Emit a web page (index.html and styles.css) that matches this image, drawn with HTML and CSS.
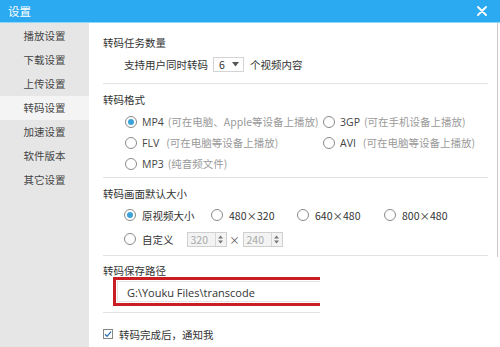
FILE: index.html
```html
<!DOCTYPE html>
<html lang="zh">
<head>
<meta charset="utf-8">
<link rel="stylesheet" href="styles.css">
</head>
<body>
<div class="window">
  <div class="titlebar">
    <span class="title">设置</span>
    <svg class="close" width="10" height="10" viewBox="0 0 10 10"><path d="M1 1L9 9M9 1L1 9" stroke="#fff" stroke-width="1.8" stroke-linecap="round"/></svg>
  </div>
  <div class="main">
    <ul class="sidebar">
      <li>播放设置</li>
      <li>下载设置</li>
      <li>上传设置</li>
      <li class="active">转码设置</li>
      <li>加速设置</li>
      <li>软件版本</li>
      <li>其它设置</li>
    </ul>
    <div class="content">
      <section class="sec sec-count">
        <div class="sec-title">转码任务数量</div>
        <div class="count-row">
          <span>支持用户同时转码</span>
          <span class="select">6<svg width="7" height="5" viewBox="0 0 7 5"><path d="M0 0H7L3.5 4.5Z" fill="#555"/></svg></span>
          <span>个视频内容</span>
        </div>
      </section>
      <section class="sec sec-format">
        <div class="sec-title">转码格式</div>
        <div class="format-grid">
          <label class="opt"><span class="radio checked"></span><b>MP4</b><i>(可在电脑、Apple等设备上播放)</i></label>
          <label class="opt"><span class="radio"></span><b>3GP</b><i>(可在手机设备上播放)</i></label>
          <label class="opt"><span class="radio"></span><b>FLV</b><i class="wide">(可在电脑等设备上播放)</i></label>
          <label class="opt"><span class="radio"></span><b>AVI</b><i class="wide">(可在电脑等设备上播放)</i></label>
          <label class="opt"><span class="radio"></span><b>MP3</b><i>(纯音频文件)</i></label>
        </div>
      </section>
      <section class="sec sec-size">
        <div class="sec-title">转码画面默认大小</div>
        <div class="size-grid">
          <label class="opt"><span class="radio checked"></span><span>原视频大小</span></label>
          <label class="opt"><span class="radio"></span><span>480×320</span></label>
          <label class="opt"><span class="radio"></span><span>640×480</span></label>
          <label class="opt"><span class="radio"></span><span>800×480</span></label>
        </div>
        <div class="custom-row">
          <label class="opt"><span class="radio"></span><span>自定义</span></label>
          <span class="spin"><span class="spin-val">320</span><span class="spin-btn"><svg width="5" height="9" viewBox="0 0 5 9"><path d="M0 3.5L2.5 0.5L5 3.5ZM0 5.5L2.5 8.5L5 5.5Z" fill="#777"/></svg></span></span>
          <span class="times">×</span>
          <span class="spin"><span class="spin-val">240</span><span class="spin-btn"><svg width="5" height="9" viewBox="0 0 5 9"><path d="M0 3.5L2.5 0.5L5 3.5ZM0 5.5L2.5 8.5L5 5.5Z" fill="#777"/></svg></span></span>
        </div>
      </section>
      <section class="sec sec-path">
        <div class="sec-title">转码保存路径</div>
        <div class="path-box"><div class="path-input">G:\Youku Files\transcode</div></div>
      </section>
      <section class="sec-notify">
        <label class="check-row"><span class="checkbox"><svg width="8" height="8" viewBox="0 0 8 8"><path d="M1 4.2L3.1 6.3L7 1.6" fill="none" stroke="#2f6fb0" stroke-width="1.3"/></svg></span><span>转码完成后，通知我</span></label>
      </section>
    </div>
  </div>
  <div class="cover"></div>
</div>
</body>
</html>
```

FILE: styles.css
```css
* { box-sizing: border-box; margin: 0; padding: 0; }
html, body { width: 500px; height: 347px; overflow: hidden; background: #fff; }
body {
  font-family: "Noto Sans CJK SC", "Noto Sans", sans-serif;
  font-size: 10.5px;
  color: #333;
}
.window { position: relative; width: 500px; height: 347px; display: flex; flex-direction: column; }
.titlebar {
  height: 23px;
  background: #2caaf1;
  border-bottom: 1px solid #8fd6fb;
  display: flex;
  align-items: center;
  justify-content: space-between;
  padding: 0 13px 0 8px;
  color: #fff;
  font-size: 11.5px;
}
.title { line-height: 22px; }
.main { flex: 1; display: flex; }
.sidebar {
  width: 89px;
  background: #e6e6e6;
  list-style: none;
  padding-top: 1px;
}
.sidebar li {
  height: 24px;
  line-height: 24px;
  text-align: center;
  color: #444;
}
.sidebar li.active { background: #f4f4f4; }
.content {
  flex: 1;
  padding: 0 9px 0 14px;
  border-right: 1px solid #c9c9c9;
  margin-right: 2px;
}
.sec { border-bottom: 1px solid #e2e2e2; }
.sec-title { line-height: 16px; height: 16px; color: #333; }
.sec-count { padding: 12px 0 11px; }
.count-row {
  margin-top: 5px;
  padding-left: 21px;
  display: flex;
  align-items: center;
  height: 16px;
  gap: 0;
}
.select {
  display: inline-flex;
  align-items: center;
  justify-content: space-between;
  width: 31px;
  height: 15px;
  border: 1px solid #d4d4d4;
  margin: 0 6px 0 5px;
  padding: 0 4px 0 5px;
  color: #333;
}
.sec-format { padding: 8px 0 3px; }
.format-grid {
  margin-top: 3px;
  padding-left: 22px;
  display: grid;
  grid-template-columns: 198px auto;
  grid-auto-rows: 21px;
}
.opt { display: flex; align-items: center; white-space: nowrap; }
.opt b { font-weight: normal; color: #444; margin-left: 5px; font-family: "Open Sans", "Noto Sans CJK SC", sans-serif; }
.opt i { font-style: normal; color: #9a9a9a; margin-left: 4px; }
.opt i.wide { margin-left: 7px; }
.radio {
  width: 12px;
  height: 12px;
  border: 1px solid #8a8a8a;
  border-radius: 50%;
  flex: none;
  display: inline-flex;
  align-items: center;
  justify-content: center;
  background: #fff;
}
.radio.checked::after {
  content: "";
  width: 6px;
  height: 6px;
  border-radius: 50%;
  background: #3aa2d8;
}
.sec-size { padding: 8px 0 6px; }
.size-grid {
  margin-top: 3px;
  padding-left: 21px;
  display: grid;
  grid-template-columns: 87px 86px 87px 87px;
  height: 20px;
}
.size-grid .opt > span:last-child, .custom-row .opt > span:last-child { margin-left: 6px; }
.custom-row {
  margin-top: 4px;
  padding-left: 21px;
  display: flex;
  align-items: center;
  height: 20px;
}
.spin {
  display: inline-flex;
  width: 40px;
  height: 15px;
  border: 1px solid #cfcfcf;
  background: #f3f3f3;
  margin-left: 13px;
}
.custom-row .spin + .times + .spin { margin-left: 0; }
.spin-val { flex: 1; color: #aaa; line-height: 13px; padding-left: 3px; }
.spin-btn {
  width: 11px;
  border-left: 1px solid #d6d6d6;
  display: flex;
  align-items: center;
  justify-content: center;
}
.times { width: 16px; text-align: center; color: #555; }
.sec-path { padding: 7px 0 6px; }
.path-box {
  margin: -2px 0 0 10px;
  width: 360px;
  height: 29px;
  border: 3px solid #c81e24;
  padding: 1px;
}
.path-input {
  height: 100%;
  border: 1px solid #e4e4e4;
  padding-left: 9px;
  line-height: 21px;
  font-size: 11px;
  color: #333;
  font-family: "Open Sans", "Noto Sans CJK SC", sans-serif;
}
.sec-notify { padding-top: 13px; }
.check-row { display: flex; align-items: center; height: 16px; }
.checkbox {
  width: 10px;
  height: 10px;
  border: 1px solid #888;
  display: inline-flex;
  align-items: center;
  justify-content: center;
  margin-right: 6px;
  background: #fff;
}
.cover {
  position: absolute;
  left: 320px;
  top: 257px;
  width: 180px;
  height: 90px;
  background: #fff;
}
```
